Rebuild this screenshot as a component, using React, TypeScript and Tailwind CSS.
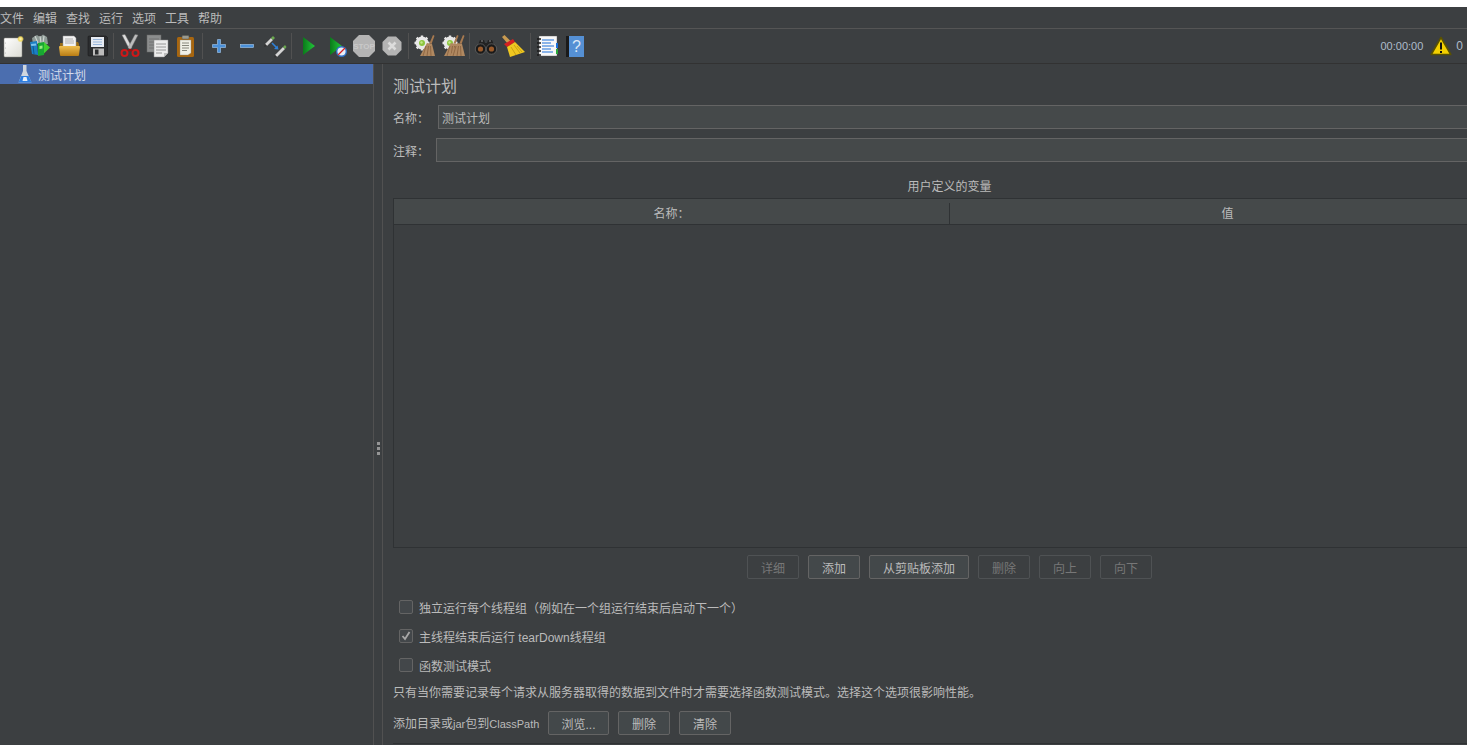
const FONT = "font-['Liberation_Sans','Noto_Sans_CJK_SC',sans-serif]";

const NewIcon = () => (
  <svg width="24" height="24" viewBox="0 0 24 24">
    <defs>
      <linearGradient id="pg" x1="0" y1="0" x2="1" y2="1">
        <stop offset="0" stopColor="#ffffff" />
        <stop offset="1" stopColor="#dcdcd4" />
      </linearGradient>
      <radialGradient id="glow">
        <stop offset="0" stopColor="#fffbc0" />
        <stop offset="0.55" stopColor="#f0d860" />
        <stop offset="1" stopColor="#f0d860" stopOpacity="0" />
      </radialGradient>
    </defs>
    <rect x="3" y="4" width="18" height="19" rx="1" fill="url(#pg)" stroke="#8a8a80" strokeWidth="0.5" />
    <circle cx="4.500" cy="9" r="0.6" fill="#bbb" />
    <circle cx="4.500" cy="14" r="0.6" fill="#bbb" />
    <circle cx="4.500" cy="19" r="0.6" fill="#bbb" />
    <circle cx="19.500" cy="5" r="3.500" fill="url(#glow)" />
  </svg>
);

const TemplatesIcon = () => (
  <svg width="24" height="24" viewBox="0 0 24 24">
    <path d="M3 4l5-3 3 2 3-2.500 4 2.500 1 7H4z" fill="#8e9a96" />
    <path d="M6 2l3 7M11 2l1 7M15 2l-1 7" stroke="#cdd5d1" strokeWidth="1.200" />
    <path d="M1 8l7-1 1 14-6-1z" fill="#1b7fc4" />
    <path d="M2 10l5-.6.3 2-5 .6z" fill="#7cc4ee" />
    <path d="M4 12l1 8" stroke="#0c5a94" strokeWidth="1" />
    <path d="M9 9l6-1v13l-6 1z" fill="#18a832" />
    <path d="M15 8l6 5.500-6 6z" fill="#3fd02e" />
    <path d="M10.500 12l3-.5v3l-3 .5z" fill="#9cea80" />
  </svg>
);

const OpenIcon = () => (
  <svg width="24" height="24" viewBox="0 0 24 24">
    <defs>
      <linearGradient id="fold" x1="0" y1="0" x2="0" y2="1">
        <stop offset="0" stopColor="#f0bf50" />
        <stop offset="1" stopColor="#b87c14" />
      </linearGradient>
    </defs>
    <path d="M3 9h3l1-1h14l1 2v3H3z" fill="#9a6c14" />
    <path d="M6 2h11l2 2v10H6z" fill="#f2f2f2" stroke="#9a9a9a" strokeWidth="0.5" />
    <path d="M8 5h8M8 7h9M8 9h9" stroke="#a0a0a0" strokeWidth="0.8" />
    <path d="M2 13q0-1 1-1h19q1 0 1 1l-1 8q0 1-1 1H4q-1 0-1-1z" fill="url(#fold)" />
  </svg>
);

const SaveIcon = () => (
  <svg width="24" height="24" viewBox="0 0 24 24">
    <path d="M3 3q0-1 1-1h17l1.500 1.500V21q0 1-1 1H4q-1 0-1-1z" fill="#2b2d2f" stroke="#161616" strokeWidth="0.5" />
    <rect x="6" y="3" width="13" height="10" fill="#e6ebf2" />
    <path d="M8 5.500h9M8 8h9M8 10.500h9" stroke="#8fb0d8" strokeWidth="0.9" />
    <rect x="8" y="14.500" width="11" height="7" fill="#bcbcbc" />
    <rect x="10" y="15.500" width="3.500" height="5" fill="#2b2d2f" />
  </svg>
);

const CutIcon = () => (
  <svg width="24" height="24" viewBox="0 0 24 24">
    <path d="M4 1l3-.5 7 13-2.500 2z" fill="#dcdcdc" stroke="#777" strokeWidth="0.4" />
    <path d="M20 1l-3-.5-7 13 2.500 2z" fill="#bcbcbc" stroke="#777" strokeWidth="0.4" />
    <circle cx="6.500" cy="19" r="3" fill="none" stroke="#d01818" strokeWidth="2" />
    <circle cx="17.500" cy="19" r="3" fill="none" stroke="#d01818" strokeWidth="2" />
    <path d="M9 16.500l3-2 3 2-3 1z" fill="#a01010" />
  </svg>
);

const CopyIcon = () => (
  <svg width="24" height="24" viewBox="0 0 24 24">
    <rect x="1" y="1" width="14" height="17" fill="#8b8d8d" stroke="#6a6a6a" strokeWidth="0.5" />
    <path d="M3 5h10M3 8h10M3 11h10M3 14h10" stroke="#6f7171" strokeWidth="0.9" />
    <path d="M8 6h14v13l-4 4H8z" fill="#ececec" stroke="#8a8a8a" strokeWidth="0.5" />
    <path d="M10 10h10M10 13h10M10 16h10M10 19h6" stroke="#8e8e8e" strokeWidth="0.9" />
    <path d="M18 23v-4h4z" fill="#bdbdbd" />
  </svg>
);

const PasteIcon = () => (
  <svg width="24" height="24" viewBox="0 0 24 24">
    <rect x="3" y="3" width="17" height="20" rx="1.500" fill="#a8660f" />
    <path d="M6 6h11v13l-3 2H6z" fill="#f0efe6" stroke="#8c8c80" strokeWidth="0.4" />
    <rect x="8" y="1.500" width="7" height="3.500" rx="1" fill="#9a9a90" stroke="#56564e" strokeWidth="0.5" />
    <path d="M8 9h7M8 11.500h7M8 14h7M8 16.500h5" stroke="#7a7a70" strokeWidth="0.9" />
  </svg>
);

const PlusIcon = () => (
  <svg width="24" height="24" viewBox="0 0 24 24">
    <path d="M10.500 5.500h3v5h5v3h-5v5h-3v-5h-5v-3h5z" fill="#4a90d9" stroke="#a8cdf0" strokeWidth="0.6" />
  </svg>
);

const MinusIcon = () => (
  <svg width="24" height="24" viewBox="0 0 24 24">
    <rect x="5.500" y="10.500" width="13" height="3" fill="#4a90d9" stroke="#a8cdf0" strokeWidth="0.6" />
  </svg>
);

const ToggleIcon = () => (
  <svg width="24" height="24" viewBox="0 0 24 24">
    <path d="M2 10l6-6 2 2-6 6z" fill="#d4d4d4" />
    <path d="M8 4l2-2 2 2-2 2z" fill="#6aa84f" />
    <path d="M2 10l-1 3 3-1z" fill="#333" />
    <path d="M12 21l8-8 2 2-8 8z" fill="#d4d4d4" />
    <path d="M20 13l2-2 1.500 2-1.500 2z" fill="#6aa84f" />
    <path d="M12 21l-1 2.500 3-.5z" fill="#333" />
    <path d="M9 9l5 5" stroke="#2f80d8" strokeWidth="1.600" />
    <path d="M15.500 15.500l-4.500-.5 3.500-3.500z" fill="#2f80d8" />
  </svg>
);

const PlayIcon = () => (
  <svg width="24" height="24" viewBox="0 0 24 24">
    <defs>
      <linearGradient id="play" x1="0" y1="0" x2="1" y2="0">
        <stop offset="0" stopColor="#0a7a1a" />
        <stop offset="1" stopColor="#22c83a" />
      </linearGradient>
    </defs>
    <path d="M7 3l12 9-12 9z" fill="url(#play)" />
  </svg>
);

const PlayNoIcon = () => (
  <svg width="24" height="24" viewBox="0 0 24 24">
    <defs>
      <linearGradient id="play2" x1="0" y1="0" x2="1" y2="0">
        <stop offset="0" stopColor="#0a7a1a" />
        <stop offset="1" stopColor="#22c83a" />
      </linearGradient>
    </defs>
    <path d="M6 3l12 9-12 9z" fill="url(#play2)" />
    <circle cx="17.500" cy="17.500" r="4.800" fill="#e8eef8" stroke="#2f6fc4" strokeWidth="1.400" />
    <path d="M14 21l7-7" stroke="#d82020" strokeWidth="1.300" />
  </svg>
);

const StopIcon = () => (
  <svg width="24" height="24" viewBox="0 0 24 24">
    <path d="M7 1h10l6 6v10l-6 6H7l-6-6V7z" fill="#b4b4b4" />
    <text x="12" y="15" textAnchor="middle" fontSize="8" fontWeight="700" fill="#c9c9c9" fontFamily="Liberation Sans, sans-serif">STOP</text>
  </svg>
);

const ShutdownIcon = () => (
  <svg width="24" height="24" viewBox="0 0 24 24">
    <path d="M8 2.500h8l5.500 5.500v8L16 21.500H8L2.500 16V8z" fill="#b4b4b4" />
    <path d="M8.500 8.500l7 7M15.500 8.500l-7 7" stroke="#dcdcdc" strokeWidth="2.600" />
  </svg>
);

const Gear = () => (
  <g>
    <circle cx="9" cy="9" r="6.500" fill="#e8e8e8" />
    <path d="M9 1.500v15M1.500 9h15M3.700 3.700l10.600 10.600M14.300 3.700L3.700 14.300" stroke="#e8e8e8" strokeWidth="2.400" />
    <circle cx="9" cy="9" r="3" fill="#8cc63f" />
    <circle cx="8.500" cy="8.500" r="1.200" fill="#c4e88a" />
  </g>
);

const Broom = ({ x = 0 }: { x?: number }) => (
  <g transform={`translate(${x} 0)`}>
    <path d="M20 1l1.500.8-3 8.200-2-.8z" fill="#a87a50" />
    <path d="M14 9l5 1 3 12H7z" fill="#b08860" />
    <path d="M13 12l-3 10M15.500 12l-1.500 10M17.500 12l.5 10" stroke="#86603c" strokeWidth="0.8" />
  </g>
);

const ClearIcon = () => (
  <svg width="24" height="24" viewBox="0 0 24 24">
    <Gear />
    <Broom />
  </svg>
);

const ClearAllIcon = () => (
  <svg width="24" height="24" viewBox="0 0 24 24">
    <Gear />
    <Broom x={-4} />
    <Broom x={2} />
  </svg>
);

const SearchIcon = () => (
  <svg width="24" height="24" viewBox="0 0 24 24">
    <path d="M6 6h4l1 3h2l1-3h4l4 10H2z" fill="#222" />
    <path d="M7 7h2M15 7h2" stroke="#8a8a8a" strokeWidth="1" />
    <circle cx="6.500" cy="15" r="5.200" fill="#1a1a1a" stroke="#777" strokeWidth="0.6" />
    <circle cx="17.500" cy="15" r="5.200" fill="#1a1a1a" stroke="#777" strokeWidth="0.6" />
    <circle cx="6.500" cy="15" r="2.600" fill="#9a5a2a" />
    <circle cx="17.500" cy="15" r="2.600" fill="#9a5a2a" />
  </svg>
);

const SweepIcon = () => (
  <svg width="24" height="24" viewBox="0 0 24 24">
    <path d="M0 3l2.500-2 6 6-3 2.500z" fill="#c89a50" />
    <path d="M2 10l9-5 2 3-8 5z" fill="#d62020" />
    <path d="M5 13l8-5 10 10-15 5z" fill="#f0c820" />
    <path d="M9 13l5 8M12 11l6 8M15 12l5 6" stroke="#b89010" strokeWidth="0.7" />
  </svg>
);

const LogIcon = () => (
  <svg width="24" height="24" viewBox="0 0 24 24">
    <rect x="4" y="2" width="18" height="20" fill="#f8f8f8" stroke="#555" strokeWidth="0.4" />
    <path d="M7 6h12M7 9h9M7 12h12M7 15h9M7 18h11" stroke="#1a6fd8" strokeWidth="1.200" />
    <path d="M2 5h4M2 9h4M2 13h4M2 17h4M2 21h4" stroke="#1a1a1a" strokeWidth="1.400" />
    <rect x="21" y="9" width="2" height="5" fill="#1a6fd8" />
    <rect x="21" y="15" width="2" height="5" fill="#2aa83a" />
  </svg>
);

const HelpIcon = () => (
  <svg width="24" height="24" viewBox="0 0 24 24">
    <rect x="3" y="2" width="4" height="21" fill="#1a1a1a" />
    <rect x="6" y="2" width="15" height="21" fill="#5590d4" />
    <text x="13.500" y="18" textAnchor="middle" fontSize="16" fill="#dce8f6" fontFamily="Liberation Sans, sans-serif">?</text>
  </svg>
);

const WarnIcon = () => (
  <svg width="22" height="20" viewBox="0 0 22 20">
    <path d="M11 1.500l9.800 17H1.200z" fill="#f4d000" stroke="#5a5200" strokeWidth="1.600" strokeLinejoin="round" />
    <rect x="10" y="6.500" width="2" height="7" fill="#111" />
    <rect x="10" y="15" width="2" height="2" fill="#111" />
  </svg>
);

const FlaskIcon = () => (
  <svg width="14" height="18" viewBox="0 0 14 18">
    <path d="M5 0h3.500v6l5 11.500H.5L5 6z" fill="#d0d6de" />
    <path d="M3.200 11h7.400l3 6.500H.5z" fill="#2f7fe0" />
    <path d="M5.500 12h3l1 4h-5z" fill="#e6f0fb" />
  </svg>
);

const Sep = () => (
  <div className="flex h-[34px] w-[5px] items-center">
    <div className="ml-[2px] h-[26px] w-px bg-[#515151]" />
  </div>
);

const Tool = ({ children }: { children: React.ReactNode }) => (
  <div className="flex h-[34px] w-[28px] shrink-0 items-center justify-center">{children}</div>
);

const Btn = ({ label, off, wide }: { label: string; off?: boolean; wide?: string }) => (
  <div
    className={`flex h-[24px] items-center justify-center rounded-[2px] border pt-[4px] text-[12px] ${wide ?? "w-[52px]"} ${
      off ? "border-[#4f5254] text-[#777777]" : "border-[#646464] bg-[#43484a] text-[#bbbbbb]"
    }`}
  >
    {label}
  </div>
);

const Check = ({ label, on }: { label: string; on?: boolean }) => (
  <div className="flex h-[14px] items-center">
    <div className="flex h-[14px] w-[14px] items-center justify-center rounded-[2px] border border-[#646464] bg-[#43474a]">
      {on && (
        <svg width="10" height="10" viewBox="0 0 10 10">
          <path d="M1.500 5l2.500 3 4.500-7" fill="none" stroke="#a8a8a8" strokeWidth="1.800" />
        </svg>
      )}
    </div>
    <span className="ml-[6px] whitespace-nowrap pt-[4px] text-[12px]">{label}</span>
  </div>
);

const menus = ["文件", "编辑", "查找", "运行", "选项", "工具", "帮助"];

export default function App() {
  return (
    <div className={`h-[745px] w-[1467px] overflow-hidden bg-white text-[#bbbbbb] ${FONT}`}>
      <div className="h-[7px] bg-white" />

      {/* menu bar */}
      <div className="flex h-[22px] items-center gap-[9px] border-b border-[#555555] bg-[#3c3f41] pt-[3px] text-[12px]">
        {menus.map((m) => (
          <span key={m} className="w-[24px] whitespace-nowrap">
            {m}
          </span>
        ))}
      </div>

      {/* toolbar */}
      <div className="flex h-[35px] items-center border-b border-[#323232] bg-[#3c3f41]">
        <div className="-ml-px flex items-center">
          <Tool><NewIcon /></Tool>
          <Tool><TemplatesIcon /></Tool>
          <Tool><OpenIcon /></Tool>
          <Tool><SaveIcon /></Tool>
          <Sep />
          <Tool><CutIcon /></Tool>
          <Tool><CopyIcon /></Tool>
          <Tool><PasteIcon /></Tool>
          <Sep />
          <Tool><PlusIcon /></Tool>
          <Tool><MinusIcon /></Tool>
          <Tool><ToggleIcon /></Tool>
          <Sep />
          <Tool><PlayIcon /></Tool>
          <Tool><PlayNoIcon /></Tool>
          <Tool><StopIcon /></Tool>
          <Tool><ShutdownIcon /></Tool>
          <Sep />
          <Tool><ClearIcon /></Tool>
          <Tool><ClearAllIcon /></Tool>
          <Sep />
          <Tool><SearchIcon /></Tool>
          <Tool><SweepIcon /></Tool>
          <Sep />
          <Tool><LogIcon /></Tool>
          <Tool><HelpIcon /></Tool>
        </div>
        <div className="ml-auto flex items-center pr-[4px] text-[11px] text-[#aebccb]">
          <span>00:00:00</span>
          <span className="ml-[7px] mr-[4px] flex"><WarnIcon /></span>
          <span className="text-[12px]">0</span>
        </div>
      </div>

      {/* body runs past the bottom of the window */}
      <div className="flex h-[768px] bg-[#3c3f41]">
        {/* tree */}
        <div className="w-[373px] shrink-0">
          <div className="flex h-[20px] items-center bg-[#4b6eaf] pl-[18px] text-[12px] text-[#d4dcec]">
            <FlaskIcon />
            <span className="ml-[6px] pt-[3px]">测试计划</span>
          </div>
        </div>

        {/* splitter */}
        <div className="flex w-[10px] shrink-0 flex-col items-center justify-center gap-[2px] border-x border-[#515151]">
          <div className="h-[3px] w-[3px] bg-[#959595]" />
          <div className="h-[3px] w-[3px] bg-[#959595]" />
          <div className="h-[3px] w-[3px] bg-[#959595]" />
        </div>

        {/* test plan panel */}
        <div className="w-[1123px] shrink-0 pl-[10px] text-[12px]">
          <div className="mt-[13px] h-[20px] text-[16px] leading-[20px]">测试计划</div>

          <div className="mt-[8px] flex h-[24px] items-center">
            <span className="w-[45px] shrink-0 pt-[3px]">名称：</span>
            <div className="flex h-[24px] flex-1 items-center border border-[#646464] bg-[#45494a] pl-[3px] pt-[4px]">测试计划</div>
          </div>
          <div className="mt-[9px] flex h-[24px] items-center">
            <span className="w-[43px] shrink-0 pt-[3px]">注释：</span>
            <div className="h-[24px] flex-1 border border-[#646464] bg-[#45494a]" />
          </div>

          <div className="mt-[15px] h-[20px] text-center leading-[20px]">用户定义的变量</div>

          {/* variables table */}
          <div className="mt-px h-[350px] border border-[#2f3234]">
            <div className="flex h-[26px] border-b border-[#2f3234] bg-[#45494a] pt-[4px]">
              <div className="flex w-[556px] items-center justify-center border-r border-[#2f3234]">名称：</div>
              <div className="flex flex-1 items-center justify-center">值</div>
            </div>
          </div>

          <div className="mt-[7px] flex justify-center gap-[9px]">
            <Btn label="详细" off />
            <Btn label="添加" />
            <Btn label="从剪贴板添加" wide="w-[100px]" />
            <Btn label="删除" off />
            <Btn label="向上" off />
            <Btn label="向下" off />
          </div>

          <div className="mt-[21px] flex flex-col gap-[15px] pl-[6px]">
            <Check label="独立运行每个线程组（例如在一个组运行结束后启动下一个）" />
            <Check label="主线程结束后运行 tearDown线程组" on />
            <Check label="函数测试模式" />
          </div>

          <div className="mt-[12px] h-[18px] whitespace-nowrap leading-[18px]">
            只有当你需要记录每个请求从服务器取得的数据到文件时才需要选择函数测试模式。选择这个选项很影响性能。
          </div>

          <div className="mt-[9px] flex items-center">
            <span className="w-[155px] shrink-0 whitespace-nowrap pt-[2px]">
              添加目录或<span className="text-[11px]">jar</span>包到<span className="text-[11px]">ClassPath</span>
            </span>
            <div className="flex gap-[9px]">
              <Btn label="浏览..." wide="w-[61px]" />
              <Btn label="删除" />
              <Btn label="清除" />
            </div>
          </div>

          <div className="mt-[8px] border-t border-[#2f3234]" />
        </div>
      </div>
    </div>
  );
}
